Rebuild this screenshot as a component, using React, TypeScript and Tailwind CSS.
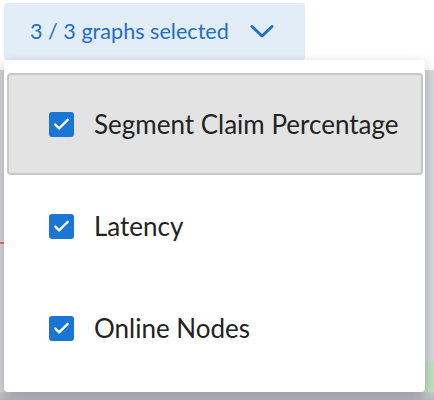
import { Check } from "lucide-react";

const items = ["Segment Claim Percentage", "Latency", "Online Nodes"];

const App = () => {
  return (
    <div className="relative w-[434px] h-[400px] overflow-hidden bg-white font-['Lato',sans-serif] flex flex-col">
      <div className="pt-[3px] pl-[4px] pb-[10px]">
        <button className="w-[301px] h-[57px] bg-[#e3edf8] rounded-[3px] flex items-center pl-[26px] gap-[21px] text-[21.6px] text-[#1f6fc5]">
          <span>3 / 3 graphs selected</span>
          <svg width="24" height="15" viewBox="0 0 24 15" fill="none">
            <path d="M2 2.5 L12 12 L22 2.5" stroke="#1f6fc5" strokeWidth="3" strokeLinecap="round" strokeLinejoin="round" />
          </svg>
        </button>
      </div>

      {/* dimmed page behind the menu */}
      <div className="flex-1 bg-[#d6d8dc] flex flex-col">
        <div className="flex-1 flex justify-between">
          <div className="w-[4px] pt-[172px]">
            <div className="h-[2px] bg-[#e07a4c]" />
          </div>
          <div className="w-[18px] flex flex-col justify-end">
            <div className="h-[30px] bg-[#bfe3c4] border-l-2 border-[#d9773f]" />
          </div>
        </div>
        <div className="h-[8px] bg-gradient-to-b from-[#c9cbcf] to-[#b8babe]" />
      </div>

      {/* menu overlay */}
      <div className="absolute left-[4px] top-[60px] w-[421px] h-[332px] bg-white rounded-[4px] shadow-[0_5px_14px_rgba(0,0,0,0.25)] pt-[13px] pl-[3px] pr-[2px]">
        {items.map((label, i) => (
          <div
            key={label}
            className={
              i === 0
                ? "h-[102px] flex items-center pl-[40px] gap-[20px] bg-[#e3e3e3] border-2 border-[#c8c8c8] rounded-[4px]"
                : "h-[102px] flex items-center pl-[42px] gap-[20px]"
            }
          >
            <span className="w-[25px] h-[25px] rounded-[3px] bg-[#1976d2] flex items-center justify-center">
              <Check size={19} color="white" strokeWidth={3} />
            </span>
            <span className="text-[26px] text-[#222222]">{label}</span>
          </div>
        ))}
      </div>
    </div>
  );
};

export default App;
